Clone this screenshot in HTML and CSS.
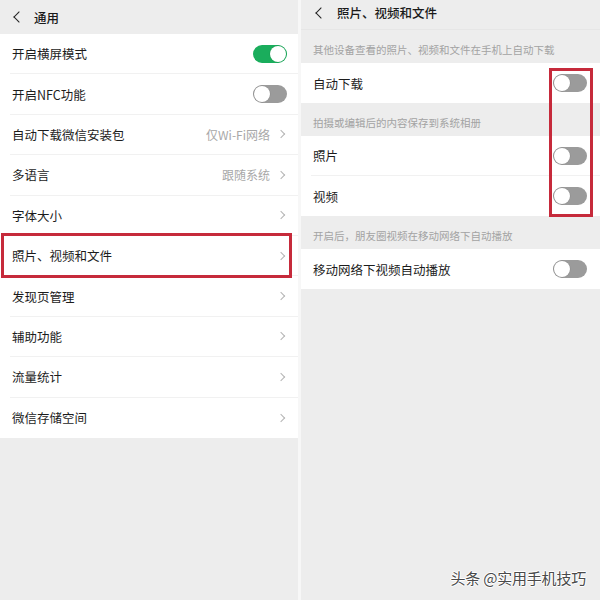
FILE: index.html
```html
<!DOCTYPE html>
<html lang="zh-CN">
<head>
    <meta charset="UTF-8">
    <meta name="viewport" content="width=device-width, initial-scale=1.0">
    <title>通用</title>
    <link rel="stylesheet" href="styles.css">
</head>
<body>
    <div class="screen">
        <div class="panel left">
            <div class="topbar">
                <span class="back"></span>
                <span class="title">通用</span>
            </div>
            <div class="list">
                <div class="item"><span class="name">开启横屏模式</span><span class="switch on"></span></div>
                <div class="item"><span class="name">开启NFC功能</span><span class="switch"></span></div>
                <div class="item"><span class="name">自动下载微信安装包</span><span class="value">仅Wi-Fi网络</span><span class="arrow"></span></div>
                <div class="item"><span class="name">多语言</span><span class="value">跟随系统</span><span class="arrow"></span></div>
                <div class="item"><span class="name">字体大小</span><span class="arrow"></span></div>
                <div class="item"><span class="name">照片、视频和文件</span><span class="arrow"></span></div>
                <div class="item"><span class="name">发现页管理</span><span class="arrow"></span></div>
                <div class="item"><span class="name">辅助功能</span><span class="arrow"></span></div>
                <div class="item"><span class="name">流量统计</span><span class="arrow"></span></div>
                <div class="item last"><span class="name">微信存储空间</span><span class="arrow"></span></div>
            </div>
            <div class="mark mark-left"></div>
        </div>
        <div class="split"></div>
        <div class="panel right">
            <div class="topbar thin">
                <span class="back"></span>
                <span class="title">照片、视频和文件</span>
            </div>
            <div class="label">其他设备查看的照片、视频和文件在手机上自动下载</div>
            <div class="list">
                <div class="item last"><span class="name">自动下载</span><span class="switch"></span></div>
            </div>
            <div class="label">拍摄或编辑后的内容保存到系统相册</div>
            <div class="list">
                <div class="item"><span class="name">照片</span><span class="switch"></span></div>
                <div class="item last"><span class="name">视频</span><span class="switch"></span></div>
            </div>
            <div class="label">开启后，朋友圈视频在移动网络下自动播放</div>
            <div class="list">
                <div class="item last"><span class="name">移动网络下视频自动播放</span><span class="switch"></span></div>
            </div>
            <div class="mark mark-right"></div>
            <div class="watermark">头条 @实用手机技巧</div>
        </div>
    </div>
</body>
</html>
```

FILE: styles.css
```css
*{
    margin: 0;
    padding: 0;
    box-sizing: border-box;
    font-family: "Noto Sans CJK SC", "Noto Sans", sans-serif;
}
body {
    width: 600px;
    height: 600px;
    background-color: #ededed;
    overflow: hidden;
}
.screen {
    display: flex;
    height: 600px;
}
.panel {
    position: relative;
    background-color: #ededed;
    height: 100%;
}
.left {
    width: 298px;
}
.split {
    width: 3px;
    background-color: #f7f7f7;
}
.right {
    flex: 1;
}
.topbar {
    height: 34px;
    display: flex;
    align-items: center;
    padding-left: 12px;
}
.topbar.thin {
    height: 30px;
    border-bottom: 1px solid #e6e6e6;
    padding-left: 13px;
    padding-bottom: 4px;
}
.back {
    width: 8px;
    height: 8px;
    border-left: 1.5px solid #222;
    border-bottom: 1.5px solid #222;
    transform: rotate(45deg);
    margin-left: 3px;
}
.title {
    font-size: 12.5px;
    font-weight: 500;
    color: #1a1a1a;
    margin-left: 11px;
}
.right .title {
    margin-left: 12px;
}
.list {
    background-color: #fff;
}
.item {
    height: 40.4px;
    margin-left: 10px;
    padding: 0 11px 0 2px;
    display: flex;
    align-items: center;
    border-bottom: 1px solid #f1f1f1;
}
.item.last {
    border-bottom: none;
}
.right .item {
    height: 40px;
    padding-right: 13px;
}
.name {
    flex: 1;
    font-size: 12.5px;
    color: #1c1c1c;
}
.value {
    font-size: 12px;
    color: #a8a8a8;
    margin-right: 8px;
}
.arrow {
    width: 6px;
    height: 6px;
    border-top: 1px solid #b4b4b4;
    border-right: 1px solid #b4b4b4;
    transform: rotate(45deg);
    margin-right: 3px;
}
.label {
    height: 33px;
    padding: 12px 0 0 12px;
    font-size: 10.5px;
    color: #a3a3a3;
}
.switch {
    position: relative;
    width: 34px;
    height: 18px;
    border-radius: 9px;
    background-color: #9b9b9b;
}
.switch::after {
    content: "";
    position: absolute;
    top: 1px;
    left: 1px;
    width: 16px;
    height: 16px;
    border-radius: 50%;
    background-color: #fff;
    box-shadow: 0 0 0 0.5px #8a8a8a;
}
.switch.on {
    background-color: #1aad5c;
}
.switch.on::after {
    left: 17px;
    box-shadow: 0 0 0 0.5px #1a9a52;
}
.mark {
    position: absolute;
    border: 3px solid #c62a3b;
}
.mark-left {
    left: 1px;
    top: 233px;
    width: 291px;
    height: 45px;
}
.mark-right {
    left: 248px;
    top: 68px;
    width: 44px;
    height: 149px;
}
.watermark {
    position: absolute;
    right: 14px;
    bottom: 12px;
    font-size: 15px;
    color: #4a4a4a;
    letter-spacing: -0.2px;
    text-shadow: 1px 0 0 #fff, -1px 0 0 #fff, 0 1px 0 #fff, 0 -1px 0 #fff;
}
```
